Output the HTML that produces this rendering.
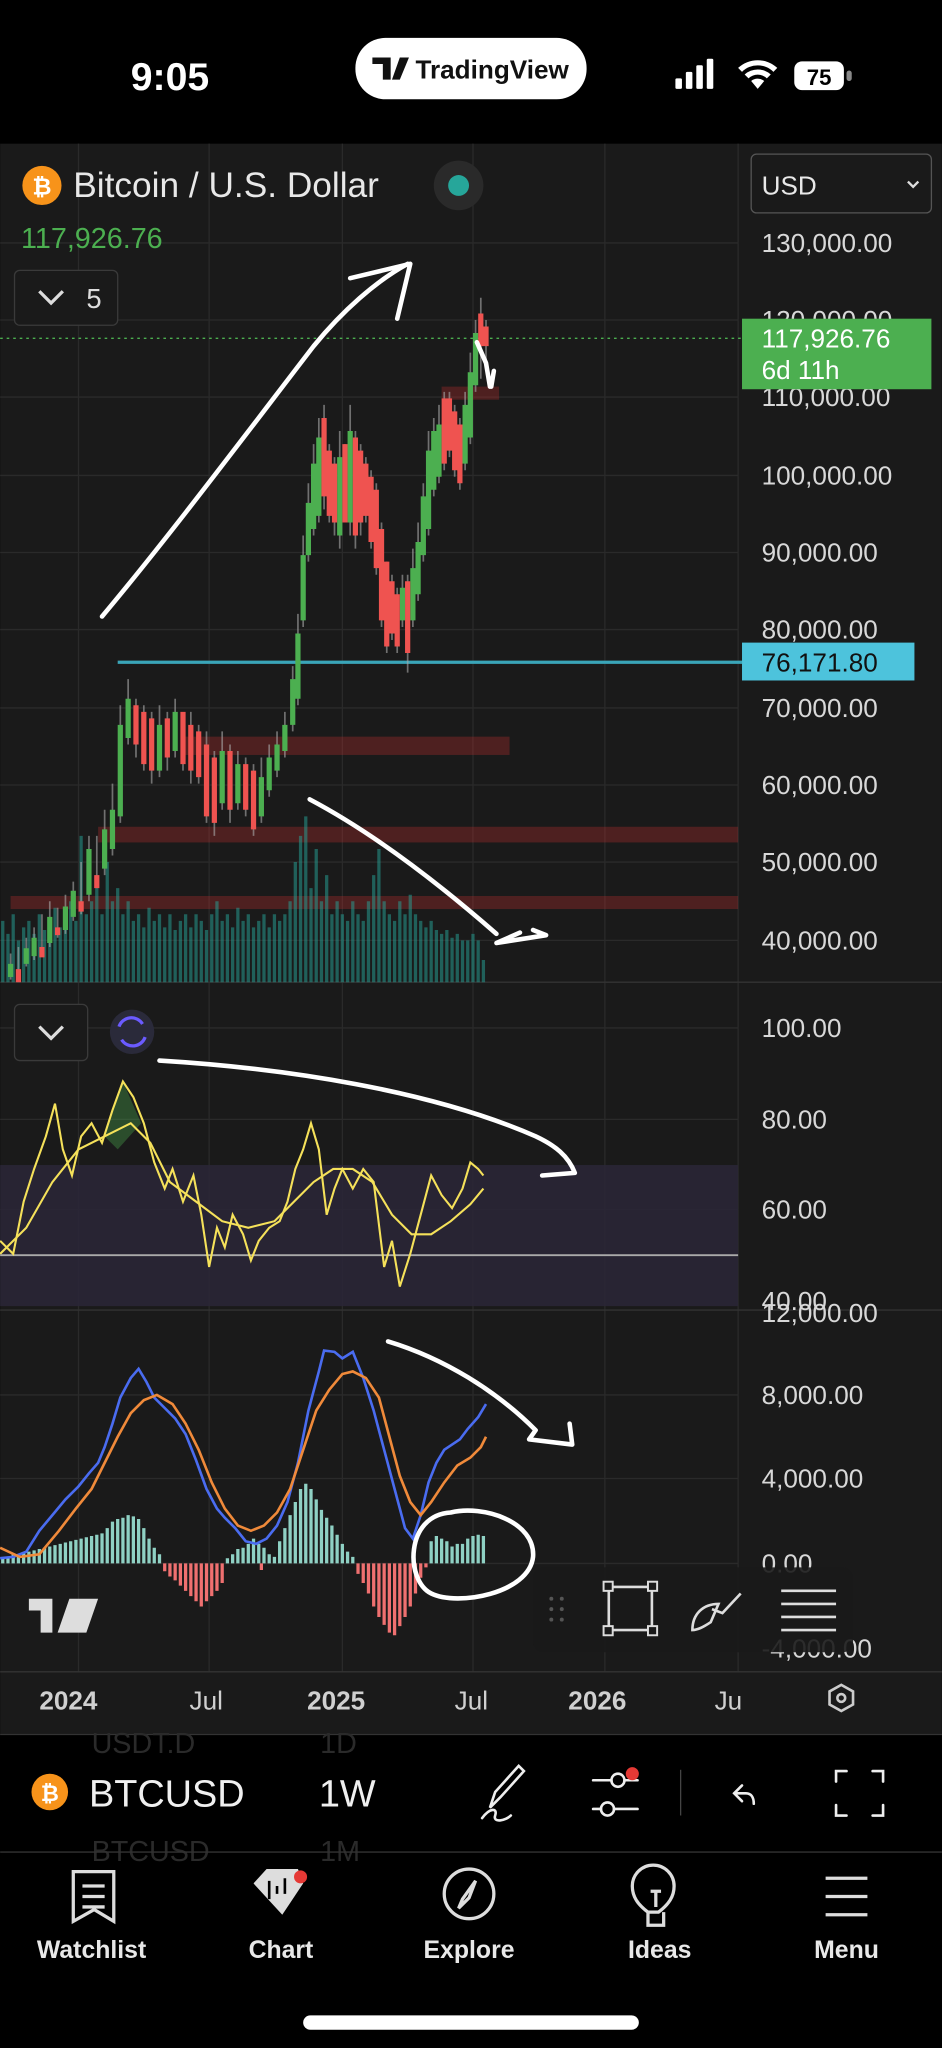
<!DOCTYPE html>
<html><head><meta charset="utf-8"><style>
html,body{margin:0;padding:0;background:#000;width:942px;height:2048px;overflow:hidden}
svg{display:block}
text{font-family:"Liberation Sans",sans-serif}
</style></head><body>
<svg width="942" height="2048" viewBox="0 0 721 1568" xmlns="http://www.w3.org/2000/svg">
<rect width="721" height="1568" fill="#000"/>
<!-- status bar -->
<text x="100" y="69" fill="#fff" font-size="30" font-weight="bold">9:05</text>
<rect x="272" y="29" width="177" height="47" rx="23" fill="#fff"/>
<path d="M285 44h14v17h-6v-12h-8z M300 61l6-17h7l-7 17z" fill="#111"/>
<circle cx="303" cy="47" r="0" fill="#111"/>
<text x="318" y="60" fill="#111" font-size="20" font-weight="bold">TradingView</text>
<rect x="517" y="60" width="5" height="8" rx="1" fill="#fff"/><rect x="525" y="55" width="5" height="13" rx="1" fill="#fff"/><rect x="533" y="50" width="5" height="18" rx="1" fill="#fff"/><rect x="541" y="45" width="5" height="23" rx="1" fill="#fff"/>
<path d="M565 52a22 22 0 0 1 30 0l-3 3a17 17 0 0 0-24 0z M570 57a15 15 0 0 1 20 0l-3 3a10 10 0 0 0-14 0z M575 62a8 8 0 0 1 10 0l-5 6z" fill="#fff"/>
<rect x="608" y="47" width="38" height="22" rx="6" fill="#fff"/><rect x="648" y="54" width="4" height="8" rx="2" fill="#888"/>
<text x="627" y="65" fill="#000" font-size="17" font-weight="bold" text-anchor="middle">75</text>

<!-- chart bg -->
<rect x="0" y="110" width="721" height="1218" fill="#1a1a1a"/>
<g stroke="#2a2a2a" stroke-width="1">
<line x1="60" y1="110" x2="60" y2="1280"/><line x1="160" y1="110" x2="160" y2="1280"/><line x1="262" y1="110" x2="262" y2="1280"/><line x1="362" y1="110" x2="362" y2="1280"/><line x1="463" y1="110" x2="463" y2="1280"/><line x1="565" y1="110" x2="565" y2="1280"/>
<line x1="0" y1="186" x2="565" y2="186"/><line x1="0" y1="245" x2="565" y2="245"/><line x1="0" y1="304" x2="565" y2="304"/><line x1="0" y1="364" x2="565" y2="364"/><line x1="0" y1="423" x2="565" y2="423"/><line x1="0" y1="482" x2="565" y2="482"/><line x1="0" y1="542" x2="565" y2="542"/><line x1="0" y1="601" x2="565" y2="601"/><line x1="0" y1="660" x2="565" y2="660"/><line x1="0" y1="720" x2="565" y2="720"/>
<line x1="0" y1="787" x2="565" y2="787"/><line x1="0" y1="857" x2="565" y2="857"/><line x1="0" y1="926" x2="565" y2="926"/>
<line x1="0" y1="1068" x2="565" y2="1068"/><line x1="0" y1="1132" x2="565" y2="1132"/><line x1="0" y1="1197" x2="565" y2="1197"/>
</g>
<line x1="0" y1="752" x2="721" y2="752" stroke="#333"/>
<line x1="0" y1="1003" x2="721" y2="1003" stroke="#333"/>
<line x1="0" y1="1280" x2="721" y2="1280" stroke="#333"/>

<!-- header -->
<circle cx="32" cy="142" r="15" fill="#f7931a"/><text x="32" y="149" fill="#fff" font-size="18" font-weight="bold" text-anchor="middle">₿</text>
<text x="56" y="151" fill="#e8e8e8" font-size="27">Bitcoin / U.S. Dollar</text>
<circle cx="351" cy="142" r="19" fill="#2a2a2a"/><circle cx="351" cy="142" r="8" fill="#26a69a"/>
<text x="16" y="190" fill="#4caf50" font-size="22">117,926.76</text>
<rect x="11" y="207" width="79" height="42" rx="4" fill="#1a1a1a" stroke="#3a3a3a"/>
<path d="M30 223l9 9 9-9" stroke="#ddd" stroke-width="2.5" fill="none"/>
<text x="66" y="236" fill="#ddd" font-size="21">5</text>

<!-- USD box -->
<rect x="575" y="118" width="138" height="45" rx="4" fill="#1a1a1a" stroke="#555"/>
<text x="583" y="149" fill="#e8e8e8" font-size="20">USD</text>
<path d="M695 139l4 4 4-4" stroke="#ddd" stroke-width="1.8" fill="none"/>

<!-- price labels -->
<g fill="#d8d8d8" font-size="20">
<text x="583" y="193">130,000.00</text><text x="583" y="252">120,000.00</text><text x="583" y="311">110,000.00</text><text x="583" y="371">100,000.00</text><text x="583" y="430">90,000.00</text><text x="583" y="489">80,000.00</text><text x="583" y="549">70,000.00</text><text x="583" y="608">60,000.00</text><text x="583" y="667">50,000.00</text><text x="583" y="727">40,000.00</text>
<text x="583" y="794">100.00</text><text x="583" y="864">80.00</text><text x="583" y="933">60.00</text><text x="583" y="1003">40.00</text>
<text x="583" y="1012">12,000.00</text><text x="583" y="1075">8,000.00</text><text x="583" y="1139">4,000.00</text><text x="583" y="1204">0.00</text><text x="583" y="1269">-4,000.00</text>
</g>
<!-- current price line -->
<line x1="0" y1="259" x2="568" y2="259" stroke="#4caf50" stroke-dasharray="2,3"/>
<rect x="568" y="244" width="145" height="54" fill="#4caf50"/>
<text x="583" y="266" fill="#fff" font-size="20">117,926.76</text>
<text x="583" y="290" fill="#fff" font-size="20">6d 11h</text>
<!-- teal line -->
<line x1="90" y1="507" x2="568" y2="507" stroke="#3aa5b8" stroke-width="2.5"/>
<rect x="568" y="492" width="132" height="29" fill="#4dc3dc"/>
<text x="583" y="514" fill="#111" font-size="20">76,171.80</text>

<!-- red zones -->
<g fill="#b22d2d" opacity="0.35">
<rect x="338" y="296" width="44" height="10"/>
<rect x="140" y="564" width="250" height="14"/>
<rect x="75" y="633" width="490" height="12"/>
<rect x="8" y="686" width="557" height="10"/>
</g>

<!-- volume -->
<g opacity="0.5">
<path d="M2 752V705M6 752V715M10 752V700M14 752V720M18 752V710M22 752V705M26 752V715M30 752V700M34 752V712M38 752V705M42 752V695M46 752V710M50 752V700M54 752V690M58 752V705M62 752V640M66 752V700M70 752V690M74 752V670M78 752V700M82 752V660M86 752V690M90 752V680M94 752V700M98 752V690M102 752V705M106 752V700M110 752V710M114 752V695M118 752V705M122 752V700M126 752V710M130 752V700M134 752V712M138 752V705M142 752V700M146 752V710M150 752V700M154 752V705M158 752V712M162 752V700M166 752V690M170 752V705M174 752V700M178 752V710M182 752V695M186 752V705M190 752V700M194 752V710M198 752V705M202 752V700M206 752V710M210 752V700M214 752V705M218 752V700M222 752V690M226 752V660M230 752V640M234 752V625M238 752V680M242 752V650M246 752V690M250 752V670M254 752V700M258 752V690M262 752V700M266 752V705M270 752V690M274 752V700M278 752V705M282 752V690M286 752V670M290 752V650M294 752V690M298 752V700M302 752V705M306 752V690M310 752V700M314 752V685M318 752V700M322 752V705M326 752V710M330 752V705M334 752V712M338 752V715M342 752V712M346 752V718M350 752V715M354 752V720M358 752V720M362 752V715M366 752V720M370 752V735" stroke="#26a69a" stroke-width="2.5"/>
</g>

<!-- candles -->
<g stroke-width="1.3">
<path d="M8 750V730M14 745V725M20 740V718M26 735V710M32 730V700M38 725V690M44 718V695M50 715V685M56 705V675M62 700V660M68 690V640M74 680V640M80 670V620M86 655V600M92 630V540M98 570V520M104 580V535M110 590V540M116 600V545M122 595V540M128 590V545M134 580V535M140 590V550M146 600V545M152 600V555M158 630V560M164 640V575M170 620V560M176 630V570M182 620V575M188 625V580M194 640V585M200 630V580M206 610V570M212 595V560M218 580V545M224 560V510M228 540V470M232 480V410M236 430V370M240 410V340M244 400V320M248 390V310M252 400V340M256 410V350M260 420V330M264 400V340M268 410V310M272 420V330M276 410V340M280 400V350M284 420V360M288 440V370M292 480V400M296 500V430M300 490V440M304 500V450M308 480V440M312 515V440M316 480V420M320 460V400M324 430V370M328 410V330M332 380V320M336 370V310M340 360V300M344 350V300M348 365V310M352 375V320M356 360V300M360 340V270M364 300V245M368 290V228M372 275V245" stroke="#aaa" opacity="0.6"/>
</g>
<g>
<path d="M6 748h4v-10h-4zM18 738h4v-12h-4zM24 732h4v-14h-4zM36 722h4v-20h-4zM48 712h4v-18h-4zM54 702h4v-20h-4zM66 685h4v-35h-4zM78 665h4v-30h-4zM84 650h4v-30h-4zM90 625h4v-70h-4zM96 565h4v-30h-4zM120 590h4v-35h-4zM132 575h4v-30h-4zM168 615h4v-40h-4zM180 615h4v-30h-4zM198 625h4v-30h-4zM204 605h4v-25h-4zM210 590h4v-20h-4zM216 575h4v-20h-4zM222 555h4v-35h-4zM226 535h4v-50h-4zM230 475h4v-50h-4zM234 425h4v-40h-4zM238 405h4v-50h-4zM242 395h4v-60h-4zM258 410h4v-60h-4zM266 400h4v-70h-4zM306 475h4v-25h-4zM314 475h4v-40h-4zM318 455h4v-40h-4zM322 425h4v-45h-4zM326 405h4v-60h-4zM330 375h4v-45h-4zM334 365h4v-40h-4zM354 355h4v-45h-4zM358 335h4v-50h-4zM362 295h4v-40h-4z" fill="#4caf50"/>
<path d="M12 742h4v10h-4zM30 725h4v8h-4zM42 710h4v6h-4zM60 690h4v8h-4zM72 670h4v10h-4zM102 540h4v30h-4zM108 545h4v40h-4zM114 550h4v40h-4zM126 550h4v30h-4zM138 545h4v40h-4zM144 555h4v35h-4zM150 560h4v35h-4zM156 570h4v55h-4zM162 580h4v50h-4zM174 575h4v45h-4zM186 585h4v35h-4zM192 590h4v45h-4zM246 320h4v60h-4zM250 345h4v50h-4zM254 355h4v45h-4zM262 340h4v60h-4zM270 335h4v75h-4zM274 345h4v55h-4zM278 355h4v40h-4zM282 365h4v50h-4zM286 375h4v60h-4zM290 405h4v70h-4zM294 430h4v65h-4zM298 445h4v40h-4zM302 455h4v40h-4zM310 445h4v55h-4zM338 305h4v50h-4zM342 305h4v40h-4zM346 315h4v45h-4zM350 325h4v45h-4zM366 240h4v25h-4zM370 250h4v15h-4z" fill="#ef5350"/>
</g>

<!-- RSI pane -->
<rect x="0" y="892" width="565" height="108" fill="#2a2636" opacity="0.9"/>
<line x1="0" y1="961" x2="565" y2="961" stroke="#aaa" stroke-width="1.5"/>
<rect x="11" y="769" width="56" height="43" rx="4" fill="#1a1a1a" stroke="#3a3a3a"/>
<path d="M30 786l9 9 9-9" stroke="#ddd" stroke-width="2.5" fill="none"/>
<circle cx="101" cy="790" r="17" fill="#2a2a3a"/>
<path d="M91 786a10 10 0 0 1 18-2M111 794a10 10 0 0 1-18 2" stroke="#6b5bff" stroke-width="2.5" fill="none"/>
<path d="M80 870L94 828L108 860L90 880Z" fill="#4caf50" opacity="0.35"/>
<path d="M0 950L10 960L18 920L26 895L35 870L42 845L48 880L55 900L62 870L70 860L78 875L86 850L94 828L102 840L110 860L118 890L126 910L132 895L140 920L148 900L154 930L160 970L166 940L172 955L178 930L186 945L192 965L198 950L206 940L214 935L220 920L226 895L232 880L238 860L244 880L250 930L256 910L262 895L270 910L278 895L286 905L294 970L300 950L306 985L314 960L322 930L330 900L338 915L346 925L354 910L360 890L366 895L370 900" stroke="#f5e15a" stroke-width="1.6" fill="none"/>
<path d="M0 960L20 940L40 905L60 880L80 870L100 860L115 875L130 905L150 920L170 935L190 940L210 935L225 920L240 905L255 895L270 895L285 905L300 930L315 945L330 945L345 935L360 922L370 910" stroke="#f5e15a" stroke-width="1.6" fill="none"/>

<!-- MACD -->
<g stroke-width="2.5">
<path d="M2 1197V1193M6 1197V1192M10 1197V1190M14 1197V1190M18 1197V1189M22 1197V1188M26 1197V1187M30 1197V1186M34 1197V1185M38 1197V1184M42 1197V1183M46 1197V1182M50 1197V1181M54 1197V1180M58 1197V1179M62 1197V1178M66 1197V1177M70 1197V1176M74 1197V1175M78 1197V1174M82 1197V1170M86 1197V1165M90 1197V1163M94 1197V1162M98 1197V1160M102 1197V1161M106 1197V1163M110 1197V1170M114 1197V1178M118 1197V1185M122 1197V1190M174 1197V1193M178 1197V1190M182 1197V1186M186 1197V1185M190 1197V1182M194 1197V1178M198 1197V1182M202 1197V1185M206 1197V1190M210 1197V1192M214 1197V1180M218 1197V1170M222 1197V1160M226 1197V1150M230 1197V1140M234 1197V1136M238 1197V1140M242 1197V1148M246 1197V1156M250 1197V1162M254 1197V1168M258 1197V1175M262 1197V1182M266 1197V1188M270 1197V1192M330 1197V1180M334 1197V1176M338 1197V1178M342 1197V1180M346 1197V1184M350 1197V1182M354 1197V1182M358 1197V1178M362 1197V1176M366 1197V1175M370 1197V1176" stroke="#8fd1c4"/>
<path d="M126 1197V1203M130 1197V1207M134 1197V1210M138 1197V1214M142 1197V1218M146 1197V1222M150 1197V1226M154 1197V1230M158 1197V1226M162 1197V1222M166 1197V1218M170 1197V1212M200 1197V1202M274 1197V1205M278 1197V1212M282 1197V1220M286 1197V1230M290 1197V1238M294 1197V1244M298 1197V1250M302 1197V1252M306 1197V1245M310 1197V1238M314 1197V1230M318 1197V1220M322 1197V1208M326 1197V1200" stroke="#ef7070"/>
</g>
<path d="M0 1193L10 1192L20 1188L30 1172L40 1160L50 1148L60 1138L68 1128L75 1120L80 1108L86 1090L92 1070L100 1055L106 1048L112 1058L118 1070L126 1078L134 1086L142 1098L150 1118L158 1140L166 1155L172 1162L180 1170L188 1180L196 1182L204 1178L212 1168L220 1150L228 1120L236 1080L244 1050L248 1034L256 1035L262 1040L270 1035L278 1055L286 1080L294 1110L302 1140L310 1170L316 1178L322 1160L328 1135L334 1120L340 1110L346 1106L352 1102L358 1094L366 1085L372 1075" stroke="#4a6cf0" stroke-width="2" fill="none"/>
<path d="M0 1185L15 1192L30 1190L45 1172L58 1155L70 1140L80 1120L90 1100L100 1082L110 1072L120 1068L132 1075L142 1090L152 1110L162 1135L172 1155L182 1168L192 1172L202 1168L212 1158L222 1140L232 1110L242 1080L252 1064L262 1052L270 1050L280 1055L290 1070L298 1100L306 1130L314 1150L322 1160L330 1150L340 1135L350 1122L360 1116L368 1108L372 1100" stroke="#f08a3a" stroke-width="2" fill="none"/>

<!-- overlay toolbar -->
<rect x="408" y="1200" width="245" height="65" rx="8" fill="#1a1a1a" opacity="0.9"/>
<g fill="#555"><circle cx="422" cy="1224" r="1.5"/><circle cx="430" cy="1224" r="1.5"/><circle cx="422" cy="1232" r="1.5"/><circle cx="430" cy="1232" r="1.5"/><circle cx="422" cy="1240" r="1.5"/><circle cx="430" cy="1240" r="1.5"/></g>
<rect x="466" y="1215" width="33" height="33" fill="none" stroke="#ddd" stroke-width="2"/>
<g fill="#1a1a1a" stroke="#ddd" stroke-width="1.5"><rect x="462" y="1211" width="7" height="7"/><rect x="496" y="1211" width="7" height="7"/><rect x="462" y="1245" width="7" height="7"/><rect x="496" y="1245" width="7" height="7"/></g>
<path d="M530 1248c0-12 8-20 20-20l-6 14c-6 4-10 6-14 6zM545 1232l8 3 14-15" stroke="#ddd" stroke-width="2" fill="none"/>
<path d="M598 1218h42M598 1228h42M598 1238h42M598 1248h42" stroke="#ddd" stroke-width="2"/>
<!-- TV logo -->
<path d="M22 1224h18v26h-9v-17h-9z M44 1250l9-26h22l-9 26z" fill="#ddd"/>
<circle cx="49" cy="1229" r="0" fill="#ddd"/>

<!-- white annotations -->
<g stroke="#fff" stroke-width="3.5" fill="none" stroke-linecap="round" stroke-linejoin="round">
<path d="M78 472C130 410 190 330 240 265C262 238 288 215 312 202"/>
<path d="M268 213L314 202L304 244"/>
<path d="M365 262L372 278L375 296M378 284L376 296"/>
<path d="M237 612C290 640 340 680 380 715"/>
<path d="M408 712L418 716L380 722L398 714"/>
<path d="M122 812C220 818 330 835 410 870C425 877 435 885 440 898L415 900"/>
<path d="M297 1027C340 1040 380 1065 410 1095L405 1102L438 1106L436 1090"/>
<path d="M345 1158C310 1160 310 1210 330 1220C350 1230 405 1220 408 1192C410 1165 370 1152 345 1158Z"/>
</g>

<!-- time axis -->
<g fill="#d0d0d0" font-size="20">
<text x="30" y="1309" font-weight="bold">2024</text><text x="145" y="1309">Jul</text><text x="235" y="1309" font-weight="bold">2025</text><text x="348" y="1309">Jul</text><text x="435" y="1309" font-weight="bold">2026</text><text x="547" y="1309">Ju</text>
</g>
<path d="M644 1290l9 5v10l-9 5-9-5v-10z" stroke="#ccc" stroke-width="2" fill="none"/><circle cx="644" cy="1300" r="3" stroke="#ccc" stroke-width="2" fill="none"/>

<!-- bottom bar -->
<rect x="0" y="1328" width="721" height="240" fill="#000"/>
<line x1="0" y1="1328" x2="721" y2="1328" stroke="#333"/>
<text x="70" y="1342" fill="#2a2a2a" font-size="22">USDT.D</text><text x="245" y="1342" fill="#2a2a2a" font-size="22">1D</text>
<text x="70" y="1425" fill="#2a2a2a" font-size="22">BTCUSD</text><text x="245" y="1425" fill="#2a2a2a" font-size="22">1M</text>
<circle cx="38" cy="1372" r="14" fill="#f7931a"/><text x="38" y="1379" fill="#fff" font-size="17" font-weight="bold" text-anchor="middle">₿</text>
<text x="68" y="1383" fill="#f0f0f0" font-size="29">BTCUSD</text>
<text x="244" y="1383" fill="#f0f0f0" font-size="29">1W</text>
<g stroke="#eee" stroke-width="2" fill="none" stroke-linecap="round">
<path d="M375 1384l4-12 18-20 4 4-18 20zM369 1392c6-8 12-8 10-2s8 4 12 0"/>
<path d="M454 1363h14M478 1363h10M454 1385h6M470 1385h18"/><circle cx="473" cy="1363" r="5"/><circle cx="465" cy="1385" r="5"/>
<path d="M568 1367l-6 6 6 6M562 1373h9c4 0 6 3 6 8"/>
<path d="M640 1364v-8h8M668 1356h8v8M676 1382v8h-8M648 1390h-8v-8"/>
</g>
<circle cx="484" cy="1358" r="5" fill="#e53935"/>
<line x1="521" y1="1355" x2="521" y2="1390" stroke="#444"/>
<line x1="0" y1="1418" x2="721" y2="1418" stroke="#333"/>

<!-- nav -->
<g stroke="#ddd" stroke-width="2.5" fill="none">
<path d="M56 1433h31v38l-15-9-16 9z M63 1444h17M63 1452h17M63 1460h17"/>
<circle cx="359" cy="1450" r="19"/><path d="M364 1440l-10 14-3 7 8-8z"/>
<path d="M496 1464c-8-6-12-12-12-20a16 16 0 0 1 32 0c0 8-4 14-12 20zM496 1464v10h12v-10M498 1448h8M502 1448v12"/>
<path d="M632 1438h32M632 1452h32M632 1466h32"/>
</g>
<path d="M194 1442l10-11h24l4 11-16 24z" fill="#ddd"/>
<path d="M206 1440v14M212 1444v6M218 1438v12" stroke="#000" stroke-width="2"/>
<circle cx="230" cy="1437" r="5" fill="#e53935"/>
<g fill="#e8e8e8" font-size="19" font-weight="bold" text-anchor="middle">
<text x="70" y="1499">Watchlist</text><text x="215" y="1499">Chart</text><text x="359" y="1499">Explore</text><text x="505" y="1499">Ideas</text><text x="648" y="1499">Menu</text>
</g>
<rect x="232" y="1543" width="257" height="11" rx="5.5" fill="#fff"/>
</svg>
</body></html>
